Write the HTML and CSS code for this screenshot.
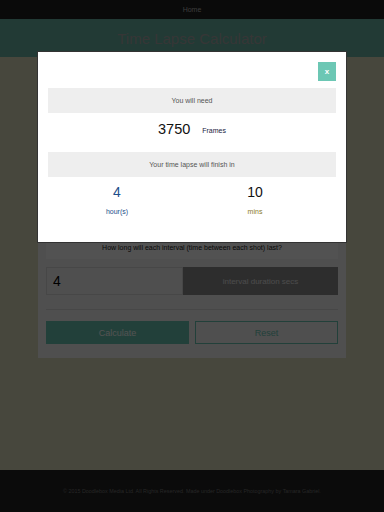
FILE: index.html
```html
<!DOCTYPE html>
<html lang="en">
<head>
    <meta charset="UTF-8">
    <meta name="viewport" content="width=device-width, initial-scale=1.0">
    <title>Time Lapse Calculator</title>
    <link rel="stylesheet" href="styles.css">
</head>
<body>

<div class="topnav"><a href="#">Home</a></div>
<header class="banner">
    <h1>Time Lapse Calculator</h1>
</header>

<main class="page">
    <div class="calculator">
        <div class="group">
            <div class="question">How long do you want your time lapse video to be?</div>
            <div class="field">
                <input type="text" class="value" value="2">
                <span class="unit">video length mins</span>
            </div>
        </div>
        <div class="group">
            <div class="question">How many frames per second will the video be?</div>
            <div class="field">
                <input type="text" class="value" value="25">
                <span class="unit">frames per sec</span>
            </div>
        </div>
        <div class="group last">
            <div class="question">How long will each interval (time between each shot) last?</div>
            <div class="field">
                <input type="text" class="value" value="4">
                <span class="unit">interval duration secs</span>
            </div>
        </div>
        <hr class="divider">
        <div class="actions">
            <button class="calc">Calculate</button>
            <button class="reset">Reset</button>
        </div>
    </div>
</main>

<footer class="footer">
    &copy; 2015 Doodlebox Media Ltd. All Rights Reserved. Made under Doodlebox Photography by Tamara Gabriel.
</footer>

<div class="backdrop"></div>

<div class="modal">
    <div class="modal-head">
        <button class="close">x</button>
    </div>
    <div class="bar">You will need</div>
    <div class="frames">
        <span class="big">3750</span>
        <span class="small">Frames</span>
    </div>
    <div class="bar">Your time lapse will finish in</div>
    <div class="duration">
        <div class="col">
            <div class="big blue">4</div>
            <div class="small blue">hour(s)</div>
        </div>
        <div class="col">
            <div class="big">10</div>
            <div class="small olive">mins</div>
        </div>
    </div>
</div>

</body>
</html>
```

FILE: styles.css
```css
body {
    font-family: "Liberation Sans", Arial, sans-serif;
    margin: 0;
    width: 384px;
    height: 512px;
    display: flex;
    flex-direction: column;
    background-color: #dbdbbe;
}
.topnav {
    height: 19px;
    background-color: #1f1f1f;
    display: flex;
    justify-content: center;
    align-items: center;
}
.topnav a {
    color: #bbbbbb;
    font-size: 7px;
    text-decoration: none;
}
.banner {
    height: 38px;
    background-color: #6ab5a6;
    display: flex;
    justify-content: center;
    align-items: center;
}
.banner h1 {
    margin: 0;
    font-size: 15px;
    font-weight: normal;
    color: #a8a8a8;
}
.page {
    flex: 1;
    display: flex;
    justify-content: center;
    padding-top: 5px;
}
.calculator {
    width: 292px;
    height: 279px;
    padding: 8px 8px 9px;
    background-color: #f5f5f5;
}
.group {
    margin-bottom: 24px;
}
.group.last {
    margin-bottom: 0;
}
.question {
    height: 23px;
    line-height: 23px;
    background-color: #ffffff;
    font-size: 7px;
    color: #222222;
    text-align: center;
    margin-bottom: 8px;
}
.field {
    display: flex;
    height: 28px;
}
.value {
    width: 137px;
    box-sizing: border-box;
    border: 1px solid #dddddd;
    background-color: #f5f5f5;
    font-family: "Liberation Sans", Arial, sans-serif;
    font-size: 14px;
    padding: 0 6px;
    color: #000000;
}
.unit {
    flex: 1;
    background-color: #8d8d8d;
    color: #e8e8e8;
    font-size: 8px;
    display: flex;
    justify-content: center;
    align-items: center;
}
.divider {
    border: none;
    border-top: 1px solid #dddddd;
    margin: 14px 0 11px;
}
.actions {
    display: grid;
    grid-template-columns: 143px 143px;
    gap: 6px;
}
.actions button {
    height: 23px;
    font-family: "Liberation Sans", Arial, sans-serif;
    font-size: 9px;
    cursor: pointer;
}
.calc {
    background-color: #6ac8b5;
    color: #ffffff;
    border: none;
}
.reset {
    background-color: #f5f5f5;
    color: #6ac8b5;
    border: 1px solid #6ac8b5;
}
.footer {
    height: 42px;
    background-color: #222222;
    color: #777777;
    font-size: 5.4px;
    display: flex;
    justify-content: center;
    align-items: center;
}
.backdrop {
    position: fixed;
    inset: 0;
    background-color: rgba(0, 0, 0, 0.68);
}
.modal {
    position: fixed;
    top: 51px;
    left: 38px;
    width: 288px;
    height: 171px;
    padding: 10px 10px 9px;
    background-color: #ffffff;
    border: 1px solid #333333;
    box-sizing: content-box;
    margin-left: -1px;
}
.modal-head {
    display: flex;
    justify-content: flex-end;
    margin-bottom: 7px;
}
.close {
    width: 18px;
    height: 19px;
    padding: 0;
    border: none;
    background-color: #6cc7b4;
    color: #ffffff;
    font-family: "Liberation Sans", Arial, sans-serif;
    font-size: 8px;
    font-weight: bold;
}
.bar {
    height: 25px;
    line-height: 25px;
    background-color: #eeeeee;
    color: #555555;
    font-size: 7px;
    text-align: center;
}
.frames {
    height: 32px;
    margin-bottom: 7px;
    display: flex;
    justify-content: center;
    align-items: center;
    gap: 12px;
}
.big {
    font-size: 14px;
    color: #111111;
}
.frames .big {
    font-size: 14.5px;
}
.small {
    font-size: 7px;
    color: #1a1a40;
}
.frames .small {
    margin-top: 3px;
}
.duration {
    display: grid;
    grid-template-columns: 1fr 1fr;
    padding: 7px 12px 0 0;
    text-align: center;
}
.duration .big {
    margin-bottom: 8px;
}
.blue {
    color: #1d4e8a;
}
.olive {
    color: #8a7a2a;
}
```
